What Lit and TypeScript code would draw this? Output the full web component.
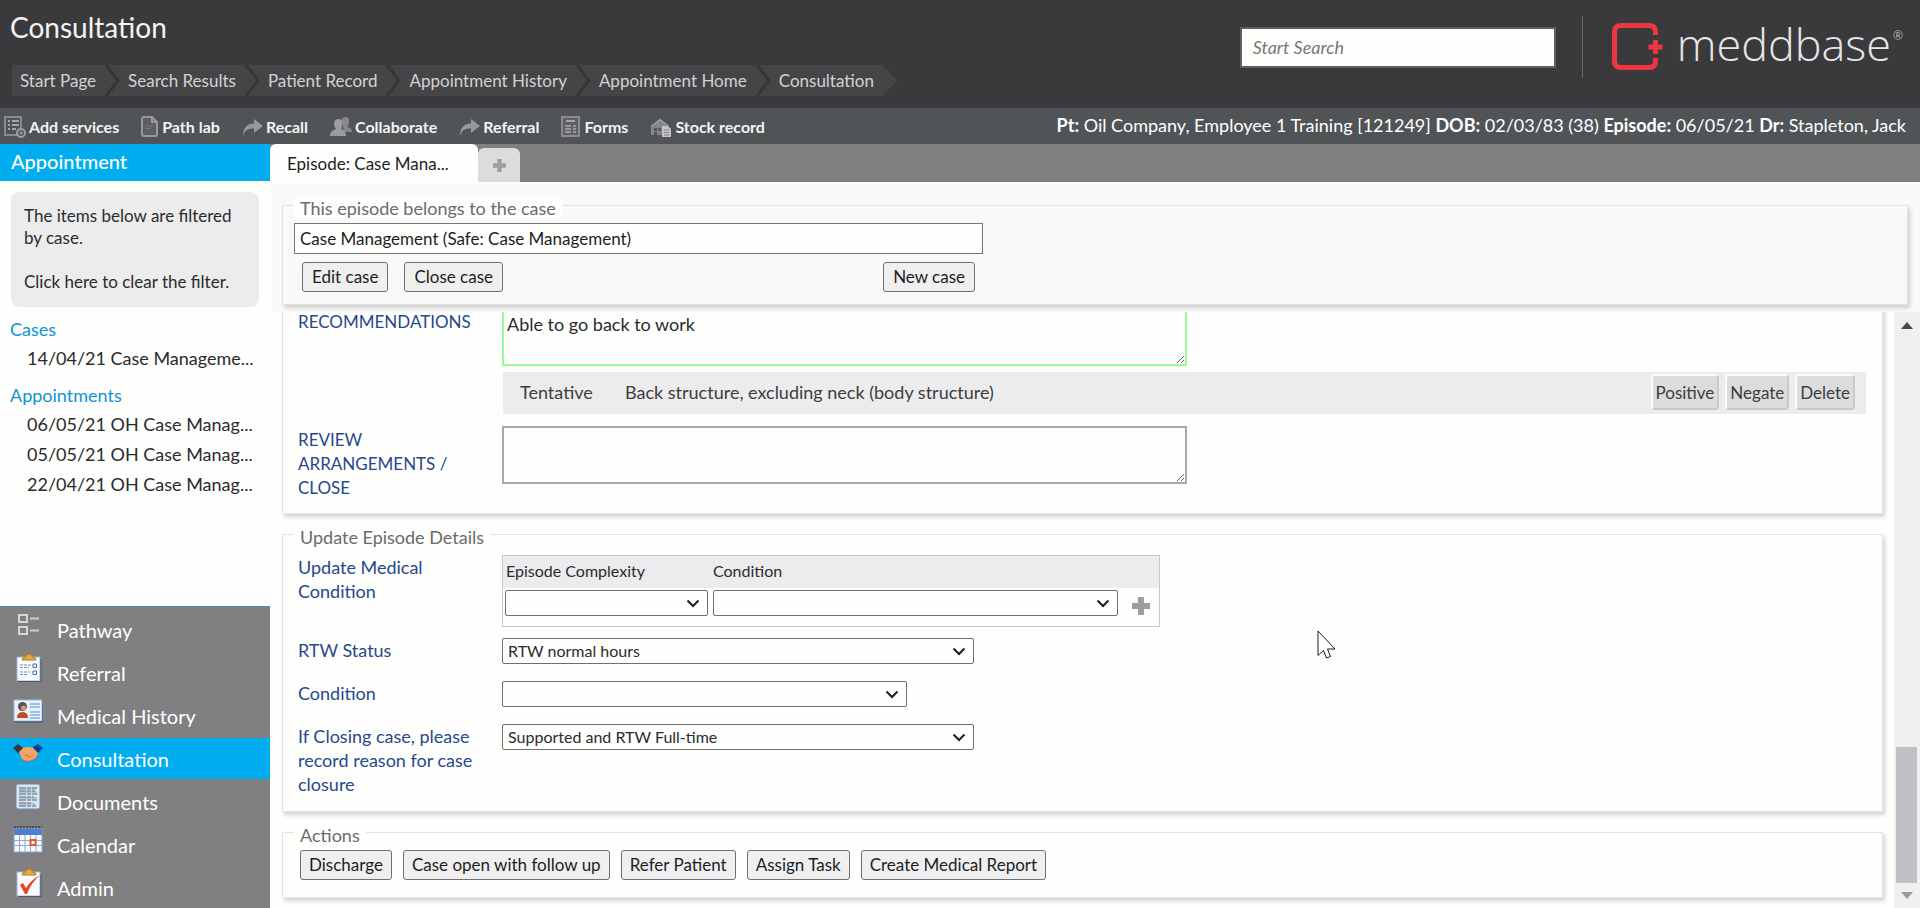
import { LitElement, html, css, svg, TemplateResult } from "lit";
import { classMap } from "lit/directives/class-map.js";

const CRUMBS = ["Start Page", "Search Results", "Patient Record", "Appointment History", "Appointment Home", "Consultation"];

const arrow = svg`<path d="M1 20C1 12 5 7.500 12 7.500V3L21 10L12 17V12.500C6 12.500 3 14 1 20Z" fill="#98989a"/>`;

const TOOLS: { label: string; width: number; icon: TemplateResult }[] = [
  {
    label: "Add services",
    width: 22,
    icon: svg`<path d="M1 1H17V19H1Z" fill="none" stroke="#8b8b8d" stroke-width="2"/>
      <path d="M4 5H6M8 5H15M4 9H6M8 9H15M4 13H6M8 13H12" stroke="#a5a5a7" stroke-width="2"/>
      <circle cx="17" cy="17" r="4" fill="#515456" stroke="#a0a0a2" stroke-width="2"/>
      <path d="M17 15V19M15 17H19" stroke="#a0a0a2"/>`,
  },
  {
    label: "Path lab",
    width: 18,
    icon: svg`<path d="M3 1H11L16 6V19Q16 20 15 20H3Q1 20 1 18V3Q1 1 3 1Z" fill="#5d5e62" stroke="#98989a" stroke-width="2"/>
      <path d="M11 1V6H16" fill="none" stroke="#98989a" stroke-width="2"/>
      <path d="M4 10H13M4 12.500H10" stroke="#77787e"/>`,
  },
  { label: "Recall", width: 21, icon: arrow },
  {
    label: "Collaborate",
    width: 22,
    icon: svg`<path d="M12 6Q11 1 15.500 1Q20 1 19 7Q18 10 17.500 11Q22 12 22 16H14Z" fill="#87878a"/>
      <path d="M4 8Q4 3 8.500 3Q13 3 12.500 8Q12 12 11 13Q16 14.500 16 20H0Q0 14.500 6 13Q4.500 12 4 8Z" fill="#9c9c9e"/>`,
  },
  { label: "Referral", width: 21, icon: arrow },
  {
    label: "Forms",
    width: 20,
    icon: svg`<path d="M1 1H18V20H1Z" fill="#5f6063" stroke="#8b8b8d" stroke-width="2"/>
      <path d="M5 5H14" stroke="#a5a5a7" stroke-width="2"/>
      <path d="M4 10H10M4 13H10M4 16H10M12 10H15M12 13H15M12 16H15" stroke="#98989a" stroke-width="2"/>`,
  },
  {
    label: "Stock record",
    width: 22,
    icon: svg`<path d="M1 11L10 4L18 10" fill="none" stroke="#a0a0a2" stroke-width="2"/>
      <path d="M1 11L10 5L17 10V19H1Z" fill="#858588"/>
      <path d="M4 12H7V15H4ZM8.500 12H11V15H8.500ZM4 16H7V19H4Z" fill="#515456"/>
      <path d="M12 10H18L21 13V21H12Z" fill="#c4c4c6"/>
      <path d="M14 14H19M14 16.500H19M14 19H19" stroke="#88888a"/>`,
  },
];

const clip = svg`<path d="M4 4H27V28H4Z" fill="#f7faff" stroke="#9fb4d6" stroke-width="1"/>
  <path d="M5 28.500H28V6" fill="none" stroke="#4a5670" stroke-width="1"/>
  <path d="M9 7Q9 4 12.500 4Q13 1 16 1Q19 1 19.500 4Q23 4 23 7Z" fill="#e7a93c" stroke="#b97a1c"/>`;

const NAV: { label: string; icon: TemplateResult }[] = [
  {
    label: "Pathway",
    icon: svg`<path d="M6 5H14V12H6ZM6 17H14V24H6Z" fill="none" stroke="#d6d6d6" stroke-width="2"/>
      <path d="M17 8.500H26M17 20.500H26" stroke="#cfcfcf" stroke-width="2"/>`,
  },
  {
    label: "Referral",
    icon: svg`${clip}<path d="M7 12H18M7 14.500H16M7 19H17M7 21.500H14" stroke="#7f8fae" stroke-dasharray="3 1"/>
      <path d="M20 11H23.500V14.500H20ZM20 18H23.500V21.500H20Z" fill="none" stroke="#4d6ea8"/>`,
  },
  {
    label: "Medical History",
    icon: svg`<path d="M1 4H29V25H1Z" fill="#e8f2fd" stroke="#9db8dc"/>
      <path d="M1 26H30V5" fill="none" stroke="#3f4d70"/>
      <circle cx="9.500" cy="10.500" r="4.500" fill="#5b5350"/><circle cx="10.500" cy="12" r="2.500" fill="#c99c84"/>
      <path d="M4 22Q4 16 9.500 16Q15 16 15 22Z" fill="#c8481e"/>
      <path d="M17 8H27M17 11H27M17 16H27M17 19H27M17 22H27" stroke="#4b8fd2"/>`,
  },
  {
    label: "Consultation",
    icon: svg`<path d="M0 9L5 5L10 9L6 15Z" fill="#35363b"/>
      <path d="M30 9L25 5L20 8L24 15Z" fill="#153c94"/>
      <path d="M6 13L10 9Q15 7 20 9L25 14Q24 19 20 21Q14 24 9 20Z" fill="#f4a468"/>
      <path d="M9 20Q14 24 20 21Q23 20 24 17M12 16L18 18" fill="none" stroke="#cf6c34"/>
      <path d="M11 10L14 8L16 10" fill="none" stroke="#c7c736"/>`,
  },
  {
    label: "Documents",
    icon: svg`<rect x="3" y="2" width="24" height="25" rx="2" fill="#d6e6f2" stroke="#6f8bab"/>
      <path d="M6 6H24M6 9H22M6 12H24M6 15H21M6 18H24M6 21H19M6 24H23" stroke="#55606e" stroke-dasharray="7 1 4 1"/>
      <path d="M6 7H22M6 10H24M6 16H24M6 22H22" stroke="#8f9dac"/>`,
  },
  {
    label: "Calendar",
    icon: svg`<path d="M1 4H29V27H1Z" fill="#f6f9ff" stroke="#8ea4cf"/>
      <path d="M1 4H29V10H1Z" fill="#4f80cf"/><path d="M1 2H29" stroke="#4a4a50" stroke-width="2" stroke-dasharray="2 1"/>
      <path d="M1 15.500H29M1 20.500H29M6.500 10V27M12 10V27M17.500 10V27M23 10V27" stroke="#95a7cb"/>
      <path d="M17.500 15H22.500V20H17.500Z" fill="#fff" stroke="#dc5a28" stroke-width="2"/>`,
  },
  {
    label: "Admin",
    icon: svg`${clip}<path d="M7 17L10 15L13 20Q18 12 27 7Q18 15 14 26H12Z" fill="#e8452a"/>`,
  },
];

class SelectBox extends LitElement {
  static properties = { label: {}, value: {} };
  declare label: string;
  declare value: string;
  constructor() {
    super();
    this.label = "";
    this.value = "";
  }
  static styles = css`
    :host { display: block; position: relative; height: 26px; }
    select {
      appearance: none; box-sizing: border-box; display: block; width: 100%; height: 26px; margin: 0;
      padding: 0 30px 0 5px; border: 1px solid #6f6f71; border-radius: 2px; background: #fefefd;
      font: 16px/24px Lato, "Open Sans", sans-serif; color: #2b2b2d;
    }
    svg { position: absolute; right: 8px; top: 9px; pointer-events: none; }
  `;
  render() {
    return html`<select aria-label=${this.label}><option>${this.value}</option></select>
      <svg width="14" height="9" viewBox="0 0 14 9"><path d="M1.500 1.500L7 7L12.500 1.500" fill="none" stroke="#1d1d1f" stroke-width="2"/></svg>`;
  }
}
customElements.define("select-box", SelectBox);

class AppRoot extends LitElement {
  static styles = css`
    :host {
      display: flex; flex-direction: column; height: 100vh; overflow: hidden; background: #fefefd;
      font-family: Lato, "Open Sans", sans-serif; font-size: 17px; color: #2b2b2d;
    }
    * { box-sizing: border-box; }
    ul, ol { list-style: none; margin: 0; padding: 0; }
    h1, h2, h3 { margin: 0; font-weight: 400; }
    a { color: inherit; text-decoration: none; }
    button, input, textarea { font-family: inherit; margin: 0; }
    svg { display: block; flex: none; }

    .header { display: flex; justify-content: space-between; height: 108px; flex: none; background: #3a3a3c; color: #f4f4f4; padding: 10px 17px 0 10px; }
    .title { font-size: 28px; line-height: 34px; margin-bottom: 21px; }
    .crumbs { display: flex; margin-left: 2px; color: #d2d2d4; line-height: 31px; white-space: nowrap; }
    .crumb { display: flex; }
    .crumb a { background: #454548; padding: 0 9px 0 8px; }
    .brand { display: flex; align-items: center; height: 74px; }
    .search { width: 316px; height: 41px; border: 2px solid #606062; background: #fefefd; padding: 0 11px; font-size: 18px; font-style: italic; border-radius: 0; }
    .search::placeholder { color: #767678; opacity: 1; }
    .divider { width: 1px; height: 62px; background: #69696b; margin: 0 29px 0 26px; }
    .wordmark { display: flex; font: 300 45px/60px "Open Sans", sans-serif; color: #e6e6e8; margin-left: 13px; padding-bottom: 6px; }
    .reg { font-size: 12px; line-height: 44px; margin-left: 2px; }

    .toolbar { display: flex; justify-content: space-between; height: 36px; flex: none; background: #515456; color: #f4f4f4; padding: 0 14px 0 4px; white-space: nowrap; }
    .tools { display: flex; gap: 22px; }
    .tool { display: flex; gap: 3px; align-items: center; padding: 1px 0 0; border: 0; background: none; color: inherit; font-size: 16px; font-weight: 700; }
    .patient { font-size: 18px; line-height: 35px; color: #fff; }

    .body { display: flex; flex: 1; min-height: 0; }
    .side { width: 270px; flex: none; display: flex; flex-direction: column; }
    .side-title { background: #00adee; color: #fff; font-size: 20px; font-weight: 500; line-height: 35px; height: 37px; padding-left: 11px; }
    .filter { display: block; margin: 11px 11px 10px; padding: 13px 13px 14px; border: 0; border-radius: 8px; background: #ececed; font-size: 17px; line-height: 22px; text-align: left; color: #2b2b2d; }
    .filter p { margin: 0 0 22px; }
    .filter p:last-child { margin: 0; }
    .group { padding: 0 16px 10px 10px; font-size: 18px; }
    .group h3 { font-size: 18px; line-height: 24px; color: #0f94d2; margin-bottom: 2px; }
    .group li { padding-left: 17px; line-height: 30px; white-space: nowrap; }
    .nav { margin-top: auto; background: #808082; border-top: 1px solid #5b84c4; color: #fff; font-size: 20px; }
    .nav a { display: flex; gap: 14px; height: 41px; margin-top: 2px; padding: 1px 0 0 13px; line-height: 41px; }
    .nav .on { background: #00adee; }

    .main { flex: 1; min-width: 0; display: flex; flex-direction: column; }
    .tabs { display: flex; align-items: flex-end; height: 38px; flex: none; background: #808082; }
    .tab { border: 0; height: 38px; width: 208px; padding: 0 17px; border-radius: 6px 6px 0 0; background: #fefefd; text-align: left; font-size: 17px; color: #1d1d1f; white-space: nowrap; overflow: hidden; text-overflow: ellipsis; }
    .tab-add { display: grid; place-items: center; border: 0; width: 42px; height: 34px; padding: 0; border-radius: 6px 6px 0 0; background: #dcdcdd; }
    .case-panel { flex: none; margin: 2px 0 0 2px; padding: 8px 12px 7px 10px; background: #f9f9fa; }

    fieldset { min-width: 0; margin: 0; border: 1px solid #e4e4df; box-shadow: 2px 3px 4px rgba(0, 0, 0, 0.17); padding: 0 11px; }
    legend { margin: 0; padding: 2px 6px 0; border-top: 4px solid transparent; background: #fefefd; background-clip: padding-box; font-size: 18px; line-height: 20px; color: #6b6b6d; }
    .case { padding: 5px 11px 12px; }
    .case-name { display: block; width: 689px; height: 31px; padding: 0 5px; border: 1px solid #767678; background: #fefefd; font-size: 17px; color: #1d1d1f; }
    .case-buttons { display: flex; gap: 16px; width: 689px; padding: 0 8px; margin-top: 8px; }
    .push { margin-left: auto; }
    .btn { height: 30px; padding: 0 8px 1px; border: 1px solid #707072; border-radius: 3px; background: #efefef; font-size: 17px; color: #1d1d1f; white-space: nowrap; }
    .case-buttons .btn { padding: 0 9px 1px; }

    .scroll { flex: 1; min-height: 0; display: flex; }
    .content { flex: 1; min-width: 0; display: flex; flex-direction: column; justify-content: flex-end; gap: 7px; overflow: hidden; padding: 0 11px 10px 12px; }
    .content fieldset { flex: none; }
    .notes { padding: 20px 16px 13px 11px; }
    .details { padding: 8px 16px 15px 11px; }
    .row { display: grid; grid-template-columns: 204px 1fr; padding-left: 4px; }
    .row + .row { margin-top: 17px; }
    .row.tight + .row { margin-top: 11px; }
    .label { font-size: 18px; line-height: 24px; color: #27488c; padding-right: 24px; }
    .caps { font-size: 17px; padding-top: 2px; }
    textarea { display: block; width: 685px; height: 58px; padding: 2px 3px 0; border: 2px solid #a9a9ad; background: #fefefd; font-size: 18px; line-height: 24px; color: #2b2b2d; border-radius: 0; }
    .filled { border-color: #98fb98; }
    .finding { display: flex; align-items: center; gap: 6px; height: 42px; margin: 6px 0 12px 1px; padding: 0 11px 2px 17px; background: #ececed; font-size: 18px; color: #3d3d3f; }
    .state { width: 99px; }
    .mini { height: 36px; padding: 0 3px; border: 2px solid; border-color: #fbfbfb #cacaca #cacaca #fbfbfb; border-radius: 4px; background: #dcdcdd; font-size: 17px; color: #3d3d3f; }
    .grid { width: 658px; border: 1px solid #c9c9ca; border-spacing: 0; font-size: 16px; }
    .grid th { height: 32px; padding: 0 3px 3px; font-weight: 400; text-align: left; background: #ececee; }
    .grid td { padding: 2px 2px 10px; vertical-align: top; }
    .grid td + td { padding-left: 3px; }
    .c1 { width: 207px; }
    .c2 { width: 410px; }
    .add { display: block; border: 0; background: none; padding: 7px 0 0 9px; }
    .w-full { width: 472px; }
    .w-mid { width: 405px; }
    .actions { padding: 5px 11px 17px; }
    .action-row { display: flex; gap: 11px; padding-left: 6px; }

    .bar { width: 26px; flex: none; display: flex; flex-direction: column; align-items: center; background: #f0f0f1; padding: 10px 1px 9px 0; }
    .thumb { width: 21px; height: 136px; background: #c0c0c4; margin: auto 0 9px; }
    .cursor { position: absolute; left: 1317px; top: 630px; pointer-events: none; }
  `;

  private crumb(text: string, last: boolean) {
    return html`<li class="crumb"><a href="#">${text}</a>
      <svg width="15" height="31" viewBox="0 0 15 31">
        ${last
          ? svg`<path d="M0 0L14 15.500L0 31Z" fill="#454548"/>`
          : svg`<path d="M0 0H15V31H0Z" fill="#454548"/><path d="M1 0L13 15.500L1 31" fill="none" stroke="#363638" stroke-width="3"/>`}
      </svg></li>`;
  }

  private plus(size: number) {
    return html`<svg width=${size} height=${size} viewBox="0 0 18 18"><path d="M6 0H12V6H18V12H12V18H6V12H0V6H6Z" fill="#9d9d9f"/></svg>`;
  }

  private group(title: string, items: string[]) {
    return html`<section class="group"><h3>${title}</h3>
      <ul>${items.map((i) => html`<li><a href="#">${i}</a></li>`)}</ul></section>`;
  }

  render() {
    return html`
      <header class="header">
        <div>
          <h1 class="title">Consultation</h1>
          <ol class="crumbs">${CRUMBS.map((c, i) => this.crumb(c, i === CRUMBS.length - 1))}</ol>
        </div>
        <div class="brand">
          <input class="search" type="search" placeholder="Start Search" aria-label="Start Search" />
          <span class="divider"></span>
          <svg width="52" height="48" viewBox="0 0 52 48">
            <path d="M43.500 12V9Q43.500 2.500 37 2.500H9Q2.500 2.500 2.500 9V38Q2.500 44.500 9 44.500H37Q43.500 44.500 43.500 38V35" fill="none" stroke="#ee3640" stroke-width="5"/>
            <path d="M43.500 17V31M36.500 24H50.500" stroke="#ee3640" stroke-width="5"/>
          </svg>
          <span class="wordmark">meddbase<span class="reg">®</span></span>
        </div>
      </header>

      <div class="toolbar">
        <div class="tools">
          ${TOOLS.map((t) => html`<button class="tool"><svg width=${t.width} height="22" viewBox="0 0 ${t.width} 22">${t.icon}</svg>${t.label}</button>`)}
        </div>
        <div class="patient"><b>Pt:</b> Oil Company, Employee 1 Training [121249] <b>DOB:</b> 02/03/83 (38) <b>Episode:</b> 06/05/21 <b>Dr:</b> Stapleton, Jack</div>
      </div>

      <div class="body">
        <aside class="side">
          <h2 class="side-title">Appointment</h2>
          <button class="filter"><p>The items below are filtered by case.</p><p>Click here to clear the filter.</p></button>
          ${this.group("Cases", ["14/04/21 Case Manageme..."])}
          ${this.group("Appointments", ["06/05/21 OH Case Manag...", "05/05/21 OH Case Manag...", "22/04/21 OH Case Manag..."])}
          <nav class="nav">
            ${NAV.map((n) => html`<a href="#" class=${classMap({ on: n.label === "Consultation" })}>
              <svg width="30" height="30" viewBox="0 0 30 30">${n.icon}</svg>${n.label}</a>`)}
          </nav>
        </aside>

        <main class="main">
          <div class="tabs">
            <button class="tab">Episode: Case Mana...</button>
            <button class="tab-add" aria-label="Add tab">${this.plus(13)}</button>
          </div>

          <div class="case-panel">
            <fieldset class="case">
              <legend>This episode belongs to the case</legend>
              <input class="case-name" aria-label="Case" value="Case Management (Safe: Case Management)" />
              <div class="case-buttons">
                <button class="btn">Edit case</button>
                <button class="btn">Close case</button>
                <button class="btn push">New case</button>
              </div>
            </fieldset>
          </div>

          <div class="scroll">
            <div class="content">
              <fieldset class="notes">
                <div class="row tight">
                  <label class="label caps" for="rec">RECOMMENDATIONS</label>
                  <div>
                    <textarea id="rec" class="filled" .value=${"Able to go back to work"}></textarea>
                    <div class="finding">
                      <span class="state">Tentative</span>
                      <span>Back structure, excluding neck (body structure)</span>
                      <button class="mini push">Positive</button>
                      <button class="mini">Negate</button>
                      <button class="mini">Delete</button>
                    </div>
                  </div>
                  <label class="label caps" for="review">REVIEW ARRANGEMENTS / CLOSE</label>
                  <div><textarea id="review"></textarea></div>
                </div>
              </fieldset>

              <fieldset class="details">
                <legend>Update Episode Details</legend>
                <div class="row tight">
                  <span class="label">Update Medical Condition</span>
                  <table class="grid">
                    <tr><th class="c1">Episode Complexity</th><th class="c2">Condition</th><th></th></tr>
                    <tr>
                      <td><select-box label="Episode Complexity"></select-box></td>
                      <td><select-box label="Condition"></select-box></td>
                      <td><button class="add" aria-label="Add row">${this.plus(18)}</button></td>
                    </tr>
                  </table>
                </div>
                <div class="row">
                  <span class="label">RTW Status</span>
                  <select-box class="w-full" label="RTW Status" value="RTW normal hours"></select-box>
                </div>
                <div class="row">
                  <span class="label">Condition</span>
                  <select-box class="w-mid" label="Condition"></select-box>
                </div>
                <div class="row">
                  <span class="label">If Closing case, please record reason for case closure</span>
                  <select-box class="w-full" label="Reason for case closure" value="Supported and RTW Full-time"></select-box>
                </div>
              </fieldset>

              <fieldset class="actions">
                <legend>Actions</legend>
                <div class="action-row">
                  ${["Discharge", "Case open with follow up", "Refer Patient", "Assign Task", "Create Medical Report"].map(
                    (b) => html`<button class="btn">${b}</button>`
                  )}
                </div>
              </fieldset>
            </div>
            <div class="bar">
              <svg width="12" height="7" viewBox="0 0 12 7"><path d="M0 7L6 0L12 7Z" fill="#4a4a4c"/></svg>
              <div class="thumb"></div>
              <svg width="12" height="7" viewBox="0 0 12 7"><path d="M0 0H12L6 7Z" fill="#9a9a9c"/></svg>
            </div>
          </div>
        </main>
      </div>
      <svg class="cursor" width="20" height="30" viewBox="0 0 20 30">
        <path d="M1 1V25.500L6.500 20.500L9.500 28L13.500 26.500L10.500 19H18Z" fill="#fefefd" stroke="#1d1d1f"/>
      </svg>
    `;
  }
}
customElements.define("app-root", AppRoot);
